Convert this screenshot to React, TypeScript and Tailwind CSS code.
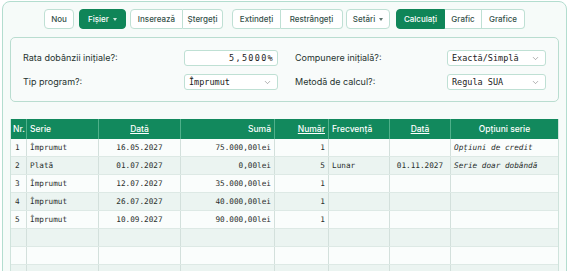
import { ChevronDown } from 'lucide-react';

const mono = "font-['DejaVu_Sans_Mono',monospace]";

type Row = {
  nr: number;
  serie: string;
  data: string;
  suma: string;
  numar: string;
  frecv: string;
  data2: string;
  opt: string;
};

const rows: Row[] = [
  { nr: 1, serie: 'Împrumut', data: '16.05.2027', suma: '75.000,00lei', numar: '1', frecv: '', data2: '', opt: 'Opțiuni de credit' },
  { nr: 2, serie: 'Plată', data: '01.07.2027', suma: '0,00lei', numar: '5', frecv: 'Lunar', data2: '01.11.2027', opt: 'Serie doar dobândă' },
  { nr: 3, serie: 'Împrumut', data: '12.07.2027', suma: '35.000,00lei', numar: '1', frecv: '', data2: '', opt: '' },
  { nr: 4, serie: 'Împrumut', data: '26.07.2027', suma: '40.000,00lei', numar: '1', frecv: '', data2: '', opt: '' },
  { nr: 5, serie: 'Împrumut', data: '10.09.2027', suma: '90.000,00lei', numar: '1', frecv: '', data2: '', opt: '' },
];

const cols = 'grid-cols-[16px_72px_82px_94px_54px_61px_61px_1fr]';

function Btn({ children, w, active, pos = 'single' }: { children: React.ReactNode; w: string; active?: boolean; pos?: 'single' | 'first' | 'mid' | 'last' }) {
  const round =
    pos === 'single' ? 'rounded-[4px]' : pos === 'first' ? 'rounded-l-[4px]' : pos === 'last' ? 'rounded-r-[4px] border-l-0' : 'border-l-0';
  return (
    <button
      className={`${w} h-[20px] flex items-center justify-center gap-[4px] border text-[8px] font-medium ${round} ${
        active ? 'bg-[#0f8558] border-[#0f8558] text-white' : 'bg-white border-[#bfe0d4] text-[#35514a]'
      }`}
    >
      {children}
    </button>
  );
}

function Caret() {
  return <span className="inline-block w-0 h-0 border-l-[2.5px] border-r-[2.5px] border-t-[3px] border-l-transparent border-r-transparent border-t-current opacity-80" />;
}

function Select({ value, w }: { value: string; w: string }) {
  return (
    <div className={`${w} h-[16px] flex items-center justify-between pl-[4px] pr-[5px] bg-white border border-[#bfe0d4] rounded-[3px] text-[8.5px] text-[#222] ${mono}`}>
      <span>{value}</span>
      <ChevronDown size={9} strokeWidth={1.5} className="text-[#777]" />
    </div>
  );
}

export default function App() {
  return (
    <div className="w-[570px] h-[271px] overflow-hidden bg-white font-['Inter',sans-serif] pl-[2px] pt-[1px]">
      <div className="w-[565px] h-[290px] bg-[#f6fbf9] border border-[#b3ddcf] rounded-[8px] pt-[7px] px-[7px]">
        <div className="flex items-center justify-center">
          <Btn w="w-[30px]">Nou</Btn>
          <div className="w-[5px]" />
          <Btn w="w-[47px]" active>Fișier <Caret /></Btn>
          <div className="w-[4px]" />
          <Btn w="w-[53px]" pos="first">Inserează</Btn>
          <Btn w="w-[40px]" pos="last">Ștergeți</Btn>
          <div className="w-[9px]" />
          <Btn w="w-[49px]" pos="first">Extindeți</Btn>
          <Btn w="w-[62px]" pos="last">Restrângeți</Btn>
          <div className="w-[3px]" />
          <Btn w="w-[44px]">Setări <Caret /></Btn>
          <div className="w-[6px]" />
          <Btn w="w-[49px]" pos="first" active>Calculați</Btn>
          <Btn w="w-[37px]" pos="mid">Grafic</Btn>
          <Btn w="w-[43px]" pos="last">Grafice</Btn>
        </div>

        <div className="mt-[8px] border border-[#b9ddd0] rounded-[5px] bg-[#f8fbfa] px-[12px] pt-[12px] pb-[11px] grid grid-cols-[255px_1fr] gap-x-[17px] gap-y-[8px] text-[9px] text-[#26332f]">
          <div className="flex items-center justify-between">
            <span>Rata dobânzii inițiale?:</span>
            <div className={`w-[94px] h-[16px] flex items-center justify-end pr-[3px] bg-white border border-[#bfe0d4] rounded-[3px] text-[8.5px] tracking-[1.3px] text-[#222] ${mono}`}>5,5000%</div>
          </div>
          <div className="flex items-center justify-between">
            <span>Compunere inițială?:</span>
            <Select value="Exactă/Simplă" w="w-[99px]" />
          </div>
          <div className="flex items-center justify-between">
            <span>Tip program?:</span>
            <Select value="Împrumut" w="w-[94px]" />
          </div>
          <div className="flex items-center justify-between">
            <span>Metodă de calcul?:</span>
            <Select value="Regula SUA" w="w-[99px]" />
          </div>
        </div>

        <div className="mt-[17px] border-x border-[#cfe3dc]">
          <div className={`grid ${cols} h-[20px] bg-[#12895d] text-white text-[8.5px] font-medium`}>
            <div className="px-[2px] flex items-center border-r border-[#4fb08a]">Nr.</div>
            <div className="px-[3px] flex items-center border-r border-[#4fb08a]">Serie</div>
            <div className="flex items-center justify-center underline border-r border-[#4fb08a]">Dată</div>
            <div className="px-[3px] flex items-center justify-end border-r border-[#4fb08a]">Sumă</div>
            <div className="px-[3px] flex items-center justify-end underline border-r border-[#4fb08a]">Număr</div>
            <div className="px-[3px] flex items-center border-r border-[#4fb08a]">Frecvență</div>
            <div className="flex items-center justify-center underline border-r border-[#4fb08a]">Dată</div>
            <div className="flex items-center justify-center">Opțiuni serie</div>
          </div>
          {[...rows, null, null, null, null].map((r, i) => (
            <div
              key={i}
              className={`grid ${cols} h-[18px] border-b border-[#dde9e5] text-[7.7px] text-[#2a2f2d] ${mono} ${
                i % 2 === 0 ? 'bg-[#fafdfc]' : 'bg-[#ebf4f1]'
              }`}
            >
              <div className="px-[4px] flex items-center border-r border-[#d3e0dc]">{r?.nr}</div>
              <div className="px-[3px] flex items-center border-r border-[#d3e0dc]">{r?.serie}</div>
              <div className="flex items-center justify-center border-r border-[#d3e0dc]">{r?.data}</div>
              <div className="px-[3px] flex items-center justify-end border-r border-[#d3e0dc]">{r?.suma}</div>
              <div className="px-[3px] flex items-center justify-end border-r border-[#d3e0dc]">{r?.numar}</div>
              <div className="px-[3px] flex items-center border-r border-[#d3e0dc]">{r?.frecv}</div>
              <div className="flex items-center justify-center border-r border-[#d3e0dc]">{r?.data2}</div>
              <div className="px-[3px] flex items-center italic">{r?.opt}</div>
            </div>
          ))}
        </div>
      </div>
    </div>
  );
}
